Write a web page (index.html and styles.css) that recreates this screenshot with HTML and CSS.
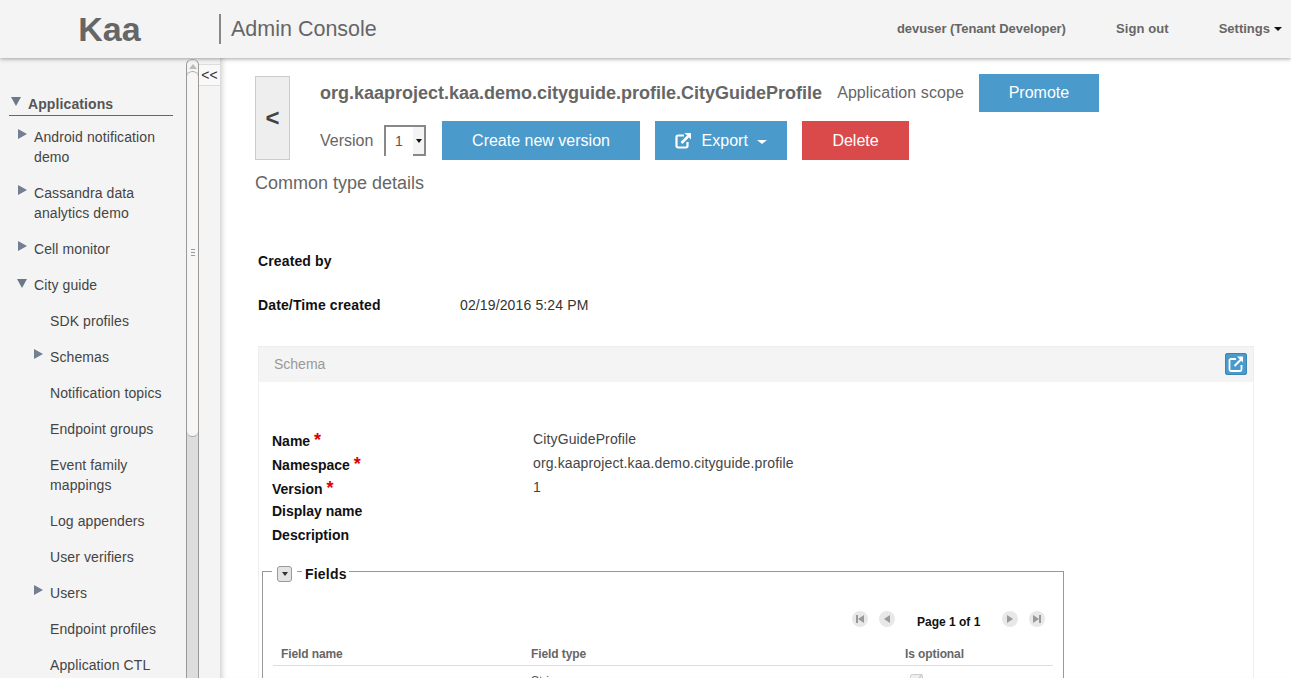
FILE: index.html
```html
<!DOCTYPE html>
<html lang="en">
<head>
    <meta charset="UTF-8">
    <meta name="viewport" content="width=device-width, initial-scale=1.0">
    <title>Kaa Admin Console</title>
    <link rel="stylesheet" href="styles.css">
</head>
<body>
    <header class="topbar">
        <div class="logo">Kaa</div>
        <div class="console-title">Admin Console</div>
        <nav class="topnav">
            <span class="user">devuser (Tenant Developer)</span>
            <a class="signout">Sign out</a>
            <a class="settings">Settings<i class="caret"></i></a>
        </nav>
    </header>
    <div class="layout">
        <aside class="sidebar">
            <div class="tree">
                <div class="tree-root"><i class="tri-down root-tri"></i>Applications</div>
                <div class="item lvl1"><span class="arrow"><i class="tri-right"></i></span><span class="label">Android notification demo</span></div>
                <div class="item lvl1"><span class="arrow"><i class="tri-right"></i></span><span class="label">Cassandra data analytics demo</span></div>
                <div class="item lvl1"><span class="arrow"><i class="tri-right"></i></span><span class="label">Cell monitor</span></div>
                <div class="item lvl1"><span class="arrow"><i class="tri-down"></i></span><span class="label">City guide</span></div>
                <div class="item lvl2"><span class="arrow"></span><span class="label">SDK profiles</span></div>
                <div class="item lvl2"><span class="arrow"><i class="tri-right"></i></span><span class="label">Schemas</span></div>
                <div class="item lvl2"><span class="arrow"></span><span class="label">Notification topics</span></div>
                <div class="item lvl2"><span class="arrow"></span><span class="label">Endpoint groups</span></div>
                <div class="item lvl2"><span class="arrow"></span><span class="label">Event family mappings</span></div>
                <div class="item lvl2"><span class="arrow"></span><span class="label">Log appenders</span></div>
                <div class="item lvl2"><span class="arrow"></span><span class="label">User verifiers</span></div>
                <div class="item lvl2"><span class="arrow"><i class="tri-right"></i></span><span class="label">Users</span></div>
                <div class="item lvl2"><span class="arrow"></span><span class="label">Endpoint profiles</span></div>
                <div class="item lvl2"><span class="arrow"></span><span class="label">Application CTL</span></div>
            </div>
            <div class="scrollbar">
                <div class="scroll-up"><i class="tri-up"></i></div>
                <div class="scroll-thumb"><span class="grip"></span></div>
                <div class="scroll-track"></div>
            </div>
            <div class="splitter"><div class="collapse">&lt;&lt;</div></div>
        </aside>
        <main class="content">
            <div class="head">
                <button class="back">&lt;</button>
                <div class="head-body">
                    <div class="head-row">
                        <h1 class="type-name">org.kaaproject.kaa.demo.cityguide.profile.CityGuideProfile</h1>
                        <span class="scope">Application scope</span>
                        <button class="btn promote">Promote</button>
                    </div>
                    <div class="head-row second">
                        <span class="version-label">Version</span>
                        <div class="select">
                            <span class="select-value">1</span>
                            <span class="select-arrow"><i class="caret"></i></span>
                        </div>
                        <button class="btn create">Create new version</button>
                        <button class="btn export">
                            <svg class="export-icon" width="17" height="17" viewBox="0 0 17 17" fill="none" stroke="#fff">
                                <path d="M9 3.5H3a1.500 1.500 0 0 0-1.500 1.500v9A1.500 1.500 0 0 0 3 15.500h8a1.500 1.500 0 0 0 1.500-1.500V10" stroke-width="2.200"/>
                                <path d="M6.500 11 13 4.500" stroke-width="2.600"/>
                                <path d="M9.500 1h6.500v6.500z" fill="#fff" stroke="none"/>
                            </svg>
                            Export<i class="caret white"></i>
                        </button>
                        <button class="btn delete">Delete</button>
                    </div>
                </div>
            </div>
            <h2 class="subtitle">Common type details</h2>
            <div class="meta">
                <div class="meta-row"><b class="meta-key">Created by</b></div>
                <div class="meta-row"><b class="meta-key">Date/Time created</b><span>02/19/2016 5:24 PM</span></div>
            </div>
            <section class="panel">
                <div class="panel-head">
                    <span class="panel-title">Schema</span>
                    <button class="icon-btn">
                        <svg width="18" height="18" viewBox="0 0 18 18" fill="none" stroke="#fff">
                            <path d="M9 4H4a1.500 1.500 0 0 0-1.500 1.500v9A1.500 1.500 0 0 0 4 16h9a1.500 1.500 0 0 0 1.500-1.500V10" stroke-width="1.800"/>
                            <path d="M7.500 11 14 4.500" stroke-width="2"/>
                            <path d="M10 1.500h6v6z" fill="#fff" stroke="none"/>
                        </svg>
                    </button>
                </div>
                <div class="form">
                    <div class="form-row"><b class="form-key">Name <em>*</em></b><span>CityGuideProfile</span></div>
                    <div class="form-row"><b class="form-key">Namespace <em>*</em></b><span>org.kaaproject.kaa.demo.cityguide.profile</span></div>
                    <div class="form-row"><b class="form-key">Version <em>*</em></b><span>1</span></div>
                    <div class="form-row short"><b class="form-key">Display name</b></div>
                    <div class="form-row"><b class="form-key">Description</b></div>
                </div>
                <fieldset class="fields">
                    <legend class="fields-legend">
                        <span class="toggle"><i class="caret"></i></span>
                        <span class="dash"></span>
                        <b class="fields-label">Fields</b>
                    </legend>
                    <div class="pager">
                        <span class="page-btn"><svg width="10" height="10" viewBox="0 0 10 10" fill="#999"><path d="M1 1h2v8H1zM9 1v8L3 5z"/></svg></span>
                        <span class="page-btn"><svg width="10" height="10" viewBox="0 0 10 10" fill="#999"><path d="M8 1v8L2 5z"/></svg></span>
                        <b class="page-text">Page 1 of 1</b>
                        <span class="page-btn"><svg width="10" height="10" viewBox="0 0 10 10" fill="#999"><path d="M2 1v8l6-4z"/></svg></span>
                        <span class="page-btn"><svg width="10" height="10" viewBox="0 0 10 10" fill="#999"><path d="M9 1H7v8h2zM1 1v8l6-4z"/></svg></span>
                    </div>
                    <table class="field-table">
                        <thead>
                            <tr><th class="col-name">Field name</th><th class="col-type">Field type</th><th>Is optional</th></tr>
                        </thead>
                        <tbody>
                            <tr>
                                <td></td>
                                <td>String</td>
                                <td>
                                    <svg class="check" width="15" height="15" viewBox="0 0 15 15">
                                        <rect x="0.500" y="1.500" width="12" height="12" rx="2" fill="#eee" stroke="#ccc"/>
                                        <path d="M4 7l2 3 6-9" fill="none" stroke="#ccc" stroke-width="1.500"/>
                                    </svg>
                                </td>
                            </tr>
                        </tbody>
                    </table>
                </fieldset>
            </section>
        </main>
    </div>
</body>
</html>
```

FILE: styles.css
```css
html, body {
    height: 100%;
}
body {
    margin: 0;
    font-family: "Liberation Sans", Arial, sans-serif;
    font-size: 14px;
    color: #333;
    background: #fff;
    overflow: hidden;
    display: flex;
    flex-direction: column;
}
button {
    font-family: inherit;
    cursor: pointer;
}

/* top bar */
.topbar {
    flex: none;
    height: 58px;
    display: flex;
    align-items: center;
    background: #f4f4f4;
    box-shadow: 0 1px 4px rgba(0, 0, 0, 0.35);
    position: relative;
    z-index: 2;
}
.logo {
    width: 219px;
    text-align: center;
    font-size: 34px;
    font-weight: bold;
    color: #666;
}
.console-title {
    height: 30px;
    line-height: 30px;
    border-left: 2px solid #888;
    padding-left: 10px;
    font-size: 21.500px;
    color: #666;
}
.topnav {
    margin-left: auto;
    padding: 0 9px 2px 0;
    display: flex;
    align-items: center;
    font-size: 13px;
    font-weight: bold;
    color: #666;
}
.user {
    margin-right: 50px;
    letter-spacing: -0.050px;
}
.signout {
    margin-right: 50px;
    letter-spacing: 0.100px;
}
.caret {
    display: inline-block;
    width: 0;
    height: 0;
    border-left: 4px solid transparent;
    border-right: 4px solid transparent;
    border-top: 4px solid #111;
}
.settings .caret {
    margin-left: 4px;
    vertical-align: 2px;
}
.caret.white {
    border-top-color: #fff;
    border-left-width: 5px;
    border-right-width: 5px;
    margin-left: 9px;
    vertical-align: 2px;
}

/* left side */
.layout {
    flex: 1;
    min-height: 0;
    display: flex;
}
.sidebar {
    flex: none;
    width: 220px;
    display: flex;
    background: #f4f4f4;
}
.tree {
    width: 186px;
    flex: none;
    padding-top: 36px;
    overflow: hidden;
    letter-spacing: 0.100px;
}
.tree-root {
    margin: 0 13px 0 9px;
    height: 21px;
    line-height: 20px;
    border-bottom: 1px solid #666;
    font-weight: bold;
    color: #555;
    display: flex;
}
.root-tri {
    margin: 3px 7px 0 2px;
}
.tri-down, .tri-right, .tri-up {
    display: block;
    width: 0;
    height: 0;
}
.tri-down {
    border-left: 5px solid transparent;
    border-right: 5px solid transparent;
    border-top: 9px solid #6c7889;
}
.tri-right {
    border-top: 5px solid transparent;
    border-bottom: 5px solid transparent;
    border-left: 9px solid #737f90;
}
.tri-up {
    border-left: 4px solid transparent;
    border-right: 4px solid transparent;
    border-bottom: 5px solid #bbb;
}
.item {
    display: flex;
    padding: 6px 13px 10px 0;
    line-height: 20px;
    color: #444;
}
.tree-root + .item {
    padding-top: 11px;
}
.lvl1 {
    padding-left: 18px;
}
.lvl2 {
    padding-left: 34px;
}
.arrow {
    flex: none;
    width: 16px;
    padding-top: 2px;
}
.item .tri-down {
    margin-left: -1px;
    margin-top: 2px;
}

/* sidebar scrollbar */
.scrollbar {
    width: 13px;
    flex: none;
    box-sizing: border-box;
    border-left: 1px solid #999;
    border-right: 1px solid #999;
    border-radius: 6px 6px 0 0;
    border-top: 1px solid #bbb;
    margin-top: 1px;
    display: flex;
    flex-direction: column;
    background: #ddd;
}
.scroll-up {
    height: 12px;
    background: #f4f4f4;
    border-radius: 6px 6px 0 0;
    display: flex;
    justify-content: center;
    padding-top: 4px;
    box-sizing: border-box;
}
.scroll-thumb {
    height: 366px;
    background: #f7f6f5;
    border: 1px solid #aaa;
    border-width: 1px 0;
    border-radius: 6px;
    display: flex;
    align-items: center;
    justify-content: center;
    box-sizing: border-box;
    margin-top: -1px;
    padding-bottom: 4px;
}
.grip {
    width: 4px;
    height: 7px;
    background: repeating-linear-gradient(#999 0, #999 1px, transparent 1px, transparent 3px);
}
.scroll-track {
    flex: 1;
}
.splitter {
    width: 21px;
    flex: none;
    padding-top: 6px;
}
.collapse {
    height: 20px;
    line-height: 21px;
    text-align: center;
    border: 1px solid #ddd;
    border-width: 1px 0;
    background: #f9f9f9;
    font-size: 14px;
    color: #333;
}

/* main area */
.content {
    flex: 1;
    min-width: 0;
    overflow: hidden;
    padding: 16px 37px 0 35px;
    box-shadow: inset 6px 0 6px -5px rgba(0, 0, 0, 0.25);
}
.head {
    display: flex;
    align-items: flex-start;
}
.back {
    flex: none;
    width: 35px;
    height: 84px;
    margin-top: 2px;
    padding: 0;
    background: #eee;
    border: 1px solid #ccc;
    font-size: 24px;
    font-weight: bold;
    color: #444;
}
.head-body {
    margin-left: 30px;
}
.head-row {
    display: flex;
    align-items: center;
    height: 38px;
}
.head-row.second {
    height: 39px;
    margin-top: 9px;
}
.type-name {
    margin: 0 15px 0 0;
    font-size: 18px;
    font-weight: bold;
    color: #666;
}
.scope {
    font-size: 16px;
    color: #666;
    margin-right: 15px;
    letter-spacing: 0.080px;
}
.btn {
    height: 100%;
    border: none;
    color: #fff;
    font-size: 16px;
    background: #4a9acc;
    padding: 0;
}
.promote {
    width: 120px;
}
.create {
    width: 198px;
    margin-right: 15px;
}
.export {
    width: 132px;
    margin-right: 15px;
}
.export-icon {
    vertical-align: -3px;
    margin-right: 5px;
}
.delete {
    width: 107px;
    background: #db4a4a;
}
.version-label {
    width: 64px;
    font-size: 16px;
    color: #666;
}
.select {
    box-sizing: border-box;
    width: 42px;
    height: 31px;
    margin-right: 16px;
    border-top: 2px solid #888;
    border-left: 2px solid #888;
    display: flex;
}
.select-value {
    flex: 1;
    padding-left: 9px;
    line-height: 29px;
    color: #555;
}
.select-arrow {
    width: 13px;
    background: #f4f4f4;
    border-right: 2px solid #888;
    border-bottom: 2px solid #888;
    box-sizing: border-box;
    display: flex;
    align-items: center;
    justify-content: center;
}
.select-arrow .caret {
    border-left-width: 3px;
    border-right-width: 3px;
}
.subtitle {
    margin: 13px 0 0;
    font-size: 18px;
    line-height: 20px;
    font-weight: normal;
    color: #666;
}
.meta {
    margin-top: 58px;
    padding-left: 3px;
}
.meta-row {
    display: flex;
    height: 44px;
    line-height: 20px;
    color: #333;
    letter-spacing: 0.130px;
}
.meta-key {
    width: 202px;
    color: #111;
}

/* schema panel */
.panel {
    margin-left: 3px;
    margin-top: 7px;
    width: 996px;
    box-sizing: border-box;
    border: 1px solid #eee;
    padding-bottom: 20px;
}
.panel-head {
    height: 35px;
    background: #f4f4f4;
    display: flex;
    align-items: center;
    padding: 0 6px 0 15px;
}
.panel-title {
    color: #999;
    padding-bottom: 2px;
}
.icon-btn {
    margin-left: auto;
    margin-top: -1px;
    width: 22px;
    height: 22px;
    padding: 1px;
    border: 1px solid #3b84b3;
    border-radius: 2px;
    background: #4a9acc;
    display: flex;
    align-items: center;
    justify-content: center;
}
.form {
    padding: 47px 0 0 13px;
}
.form-row {
    display: flex;
    height: 24px;
    line-height: 20px;
    color: #444;
    letter-spacing: 0.130px;
}
.form-row.short {
    height: 22px;
}
.form-key {
    flex: none;
    width: 261px;
    color: #111;
    line-height: 24px;
    height: 24px;
    letter-spacing: 0;
}
.form-row.short .form-key {
    line-height: 20px;
}
.form-key em {
    font-style: normal;
    color: #d00;
    font-size: 18px;
    line-height: 14px;
}
.fields {
    margin: 20px 0 0 3px;
    width: 802px;
    box-sizing: border-box;
    border: 1px solid #999;
    padding: 0 10px;
    min-width: 0;
}
.fields-legend {
    display: flex;
    align-items: flex-start;
    height: 8px;
    padding: 0 2px 0 5px;
    margin-left: -1px;
}
.toggle {
    flex: none;
    box-sizing: border-box;
    width: 15px;
    height: 16px;
    margin-top: -1px;
    border: 1px solid #999;
    border-radius: 3px;
    background: #e4e4e4;
    display: flex;
    align-items: center;
    justify-content: center;
}
.toggle .caret {
    border-left-width: 3px;
    border-right-width: 3px;
    border-top-color: #333;
}
.dash {
    flex: none;
    width: 5px;
    height: 1px;
    background: #999;
    margin: 4px 3px 0 5px;
}
.fields-label {
    color: #111;
    line-height: 16px;
    margin-top: -1px;
    letter-spacing: 0.200px;
}
.pager {
    display: flex;
    align-items: center;
    justify-content: flex-end;
    margin-top: 36px;
    padding-right: 8px;
    height: 16px;
}
.page-btn {
    width: 16px;
    height: 16px;
    border-radius: 50%;
    background: #e8e8e8;
    display: flex;
    align-items: center;
    justify-content: center;
    margin-left: 11px;
}
.page-text {
    width: 74px;
    margin: 5px 0 0 22px;
    font-size: 12px;
    color: #111;
}
.field-table {
    width: 780px;
    table-layout: fixed;
    border-collapse: collapse;
    margin-top: 19px;
    font-size: 12px;
}
.field-table th {
    text-align: left;
    color: #666;
    padding: 0 0 4px 8px;
    height: 19px;
    border-bottom: 1px solid #ddd;
    box-sizing: border-box;
    vertical-align: bottom;
    letter-spacing: -0.100px;
}
.field-table td {
    padding: 8px 0 0 8px;
    color: #555;
    vertical-align: top;
}
.field-table .col-name {
    width: 250px;
}
.field-table .col-type {
    width: 374px;
}
.check {
    display: block;
    margin: -1px 0 0 5px;
}
```
